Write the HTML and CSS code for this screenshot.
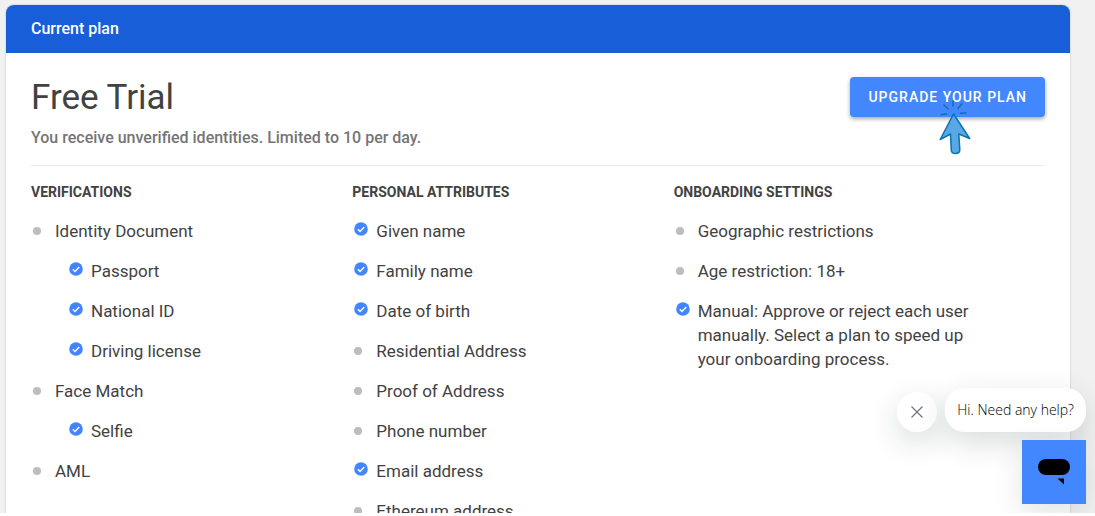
FILE: index.html
```
<!DOCTYPE html>
<html lang="en">

<head>
  <meta charset="UTF-8">
  <meta name="viewport" content="width=device-width, initial-scale=1.0">
  <title>Current plan</title>
  <link rel="stylesheet" href="styles.css">
</head>

<body>
  <!-- Shared icons -->
  <svg class="sprite" aria-hidden="true">
    <symbol id="check" viewBox="0 0 14 14">
      <circle cx="7" cy="7" r="6.8" fill="#4285ff" />
      <path d="M3.8 7.2l2.2 2.2 4.3-4.3" fill="none" stroke="#fff" stroke-width="1.4" />
    </symbol>
  </svg>

  <div class="page">
    <main class="card">
      <h2 class="card-header">Current plan</h2>
      <div class="card-body">
        <div class="plan">
          <div>
            <h1 class="plan-name">Free Trial</h1>
            <p class="plan-info">You receive unverified identities. Limited to 10 per day.</p>
          </div>
          <div class="upgrade">
            <button type="button" class="upgrade-button">UPGRADE YOUR PLAN</button>
            <svg class="pointer" viewBox="0 0 32 56" aria-hidden="true">
              <path d="M2 15.6l5.5-.6M5 6l4 3.8M14 2v5M23 4.8l-4 4.6M21.5 14.2l5.500-.2" fill="none" stroke="#0d6fa8" stroke-width="1.4" stroke-linecap="round" />
              <path d="M14.500 15L1.200 40.500l10.300-5.500.8 16.500q.3 3 4 3 4.500 0 4.500-3.500l-1-16 10.900 4.500z" fill="#5aa7e6" stroke="#0974ad" stroke-width="1.500" stroke-linejoin="round" />
            </svg>
          </div>
        </div>

        <div class="features">
          <section class="column">
            <h3 class="column-title">VERIFICATIONS</h3>
            <ul class="list">
              <li class="item"><span class="mark"><span class="dot"></span></span>Identity Document</li>
              <li class="item nested"><span class="mark"><svg class="check"><use href="#check" /></svg></span>Passport</li>
              <li class="item nested"><span class="mark"><svg class="check"><use href="#check" /></svg></span>National ID</li>
              <li class="item nested"><span class="mark"><svg class="check"><use href="#check" /></svg></span>Driving license</li>
              <li class="item"><span class="mark"><span class="dot"></span></span>Face Match</li>
              <li class="item nested"><span class="mark"><svg class="check"><use href="#check" /></svg></span>Selfie</li>
              <li class="item"><span class="mark"><span class="dot"></span></span>AML</li>
            </ul>
          </section>

          <section class="column">
            <h3 class="column-title">PERSONAL ATTRIBUTES</h3>
            <ul class="list">
              <li class="item"><span class="mark"><svg class="check"><use href="#check" /></svg></span>Given name</li>
              <li class="item"><span class="mark"><svg class="check"><use href="#check" /></svg></span>Family name</li>
              <li class="item"><span class="mark"><svg class="check"><use href="#check" /></svg></span>Date of birth</li>
              <li class="item"><span class="mark"><span class="dot"></span></span>Residential Address</li>
              <li class="item"><span class="mark"><span class="dot"></span></span>Proof of Address</li>
              <li class="item"><span class="mark"><span class="dot"></span></span>Phone number</li>
              <li class="item"><span class="mark"><svg class="check"><use href="#check" /></svg></span>Email address</li>
              <li class="item"><span class="mark"><span class="dot"></span></span>Ethereum address</li>
            </ul>
          </section>

          <section class="column">
            <h3 class="column-title">ONBOARDING SETTINGS</h3>
            <ul class="list">
              <li class="item"><span class="mark"><span class="dot"></span></span>Geographic restrictions</li>
              <li class="item"><span class="mark"><span class="dot"></span></span>Age restriction: 18+</li>
              <li class="item"><span class="mark"><svg class="check"><use href="#check" /></svg></span>Manual: Approve or reject each user manually. Select a plan to speed up your onboarding process.</li>
            </ul>
          </section>
        </div>
      </div>
    </main>

    <!-- Help chat -->
    <aside class="chat">
      <div class="chat-row">
        <button type="button" class="chat-close" aria-label="Close">
          <svg width="12" height="12" viewBox="0 0 12 12"><path d="M.5.5l11 11M11.500.5l-11 11" fill="none" stroke="#6c757d" stroke-width="1.200" /></svg>
        </button>
        <p class="chat-message">Hi. Need any help?</p>
      </div>
      <button type="button" class="chat-open" aria-label="Open chat">
        <svg width="34" height="28" viewBox="0 0 34 28">
          <rect x="1" y="1" width="32" height="16" rx="8" />
          <path d="M20.500 20.500h6.500v6z" />
        </svg>
      </button>
    </aside>
  </div>
</body>

</html>
```
FILE: styles.css
```
/* Global Styles */
* {
  box-sizing: border-box;
}

body {
  margin: 0;
  background: #fff;
  color: #424242;
  font-family: Roboto, sans-serif;
  font-size: 17px;
  line-height: 24px;
}

h1,
h2,
h3,
p,
ul {
  margin: 0;
  padding: 0;
}

.sprite {
  display: none;
}

.page {
  position: relative;
  height: calc(100vh - 3px);
  padding: 5px 25px 0 6px;
  background: #f1f1f1;
  overflow: hidden;
}

/* Card */
.card {
  background: #fff;
  border-radius: 8px;
  box-shadow: 0 0 2px rgba(0, 0, 0, 0.25);
}

.card-header {
  padding: 12px 25px;
  border-radius: 8px 8px 0 0;
  background: #175ed8;
  color: #fff;
  font-size: 16px;
  font-weight: 500;
}

.card-body {
  padding: 24px 25px;
}

.plan {
  display: flex;
  justify-content: space-between;
  align-items: flex-start;
  padding-bottom: 15px;
  border-bottom: 1px solid #ebebeb;
}

.plan-name {
  margin-bottom: 7px;
  font-size: 35px;
  font-weight: 400;
  line-height: 42px;
}

.plan-info {
  color: #757575;
  font-size: 16px;
  font-weight: 500;
}

/* Upgrade button */
.upgrade {
  position: relative;
}

.upgrade-button {
  height: 40px;
  padding: 0 18px;
  border: none;
  border-radius: 4px;
  background: #4387ff;
  box-shadow: 0 2px 4px rgba(0, 0, 0, 0.35);
  color: #fff;
  font-family: inherit;
  font-size: 14px;
  font-weight: 500;
  letter-spacing: 1px;
  cursor: pointer;
}

.pointer {
  position: absolute;
  top: 22px;
  right: 74px;
  width: 32px;
  height: 56px;
}

/* Feature columns */
.features {
  display: grid;
  grid-template-columns: repeat(3, 1fr);
  padding: 14px 50px 0 0;
}

.column {
  padding-right: 24px;
}

.column-title {
  margin-bottom: 15px;
  font-size: 14px;
  font-weight: 700;
}

.list {
  display: flex;
  flex-direction: column;
  gap: 16px;
  list-style: none;
}

.item {
  display: flex;
}

.nested {
  padding-left: 36px;
}

.mark {
  display: flex;
  flex: 0 0 24px;
  height: 24px;
  align-items: center;
  padding-left: 2px;
}

.dot {
  width: 8px;
  height: 8px;
  border-radius: 50%;
  background: #bdbdbd;
}

.check {
  width: 14px;
  height: 14px;
  margin-bottom: 4px;
}

/* Help chat */
.chat {
  position: absolute;
  right: 9px;
  bottom: 9px;
  display: flex;
  flex-direction: column;
  align-items: flex-end;
  gap: 8px;
}

.chat-row {
  display: flex;
  align-items: flex-end;
  gap: 8px;
}

.chat-close,
.chat-message {
  background: #fff;
  box-shadow: 0 10px 30px rgba(0, 40, 40, 0.16);
}

.chat-close {
  display: flex;
  justify-content: center;
  align-items: center;
  width: 40px;
  height: 40px;
  padding: 0;
  border: none;
  border-radius: 50%;
  cursor: pointer;
}

.chat-message {
  padding: 10px 12px;
  border-radius: 20px;
  color: #000;
  font-family: "Open Sans", sans-serif;
  font-size: 14px;
  font-weight: 300;
}

.chat-open {
  display: flex;
  justify-content: center;
  align-items: center;
  width: 64px;
  height: 64px;
  padding: 0;
  border: none;
  background: #4387ff;
  box-shadow: 0 10px 30px rgba(0, 40, 40, 0.12);
  cursor: pointer;
}
```
